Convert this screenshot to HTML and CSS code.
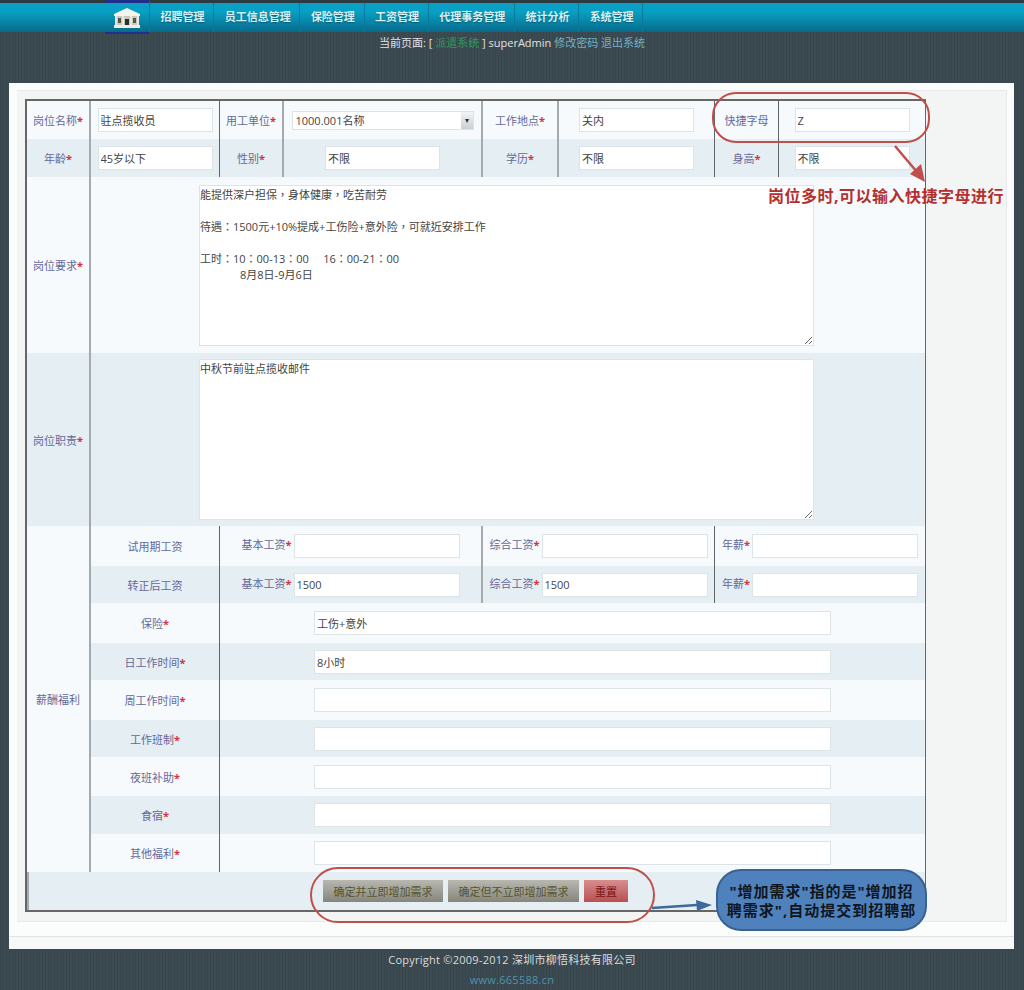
FILE: index.html
```html
<!DOCTYPE html>
<html lang="en">
<head>
  <meta charset="UTF-8">
  <meta name="viewport" content="width=device-width, initial-scale=1.0">
  <title>增加需求</title>
  <link rel="stylesheet" href="styles.css">
</head>
<body>
  <!-- Top navigation -->
  <div class="nav">
    <a class="nav-home">
      <svg width="28" height="20" viewBox="0 0 28 20">
        <path d="M14 0 L27 6 L27 8 L1 8 L1 6 Z" fill="#f4f4ee"/>
        <rect x="2" y="8" width="24" height="9" fill="#c9c9bc"/>
        <rect x="1" y="17" width="26" height="3" fill="#eeeee6"/>
        <rect x="5" y="10" width="3" height="5" fill="#55554e"/>
        <rect x="12" y="11" width="4" height="6" fill="#2e2e2a"/>
        <rect x="20" y="10" width="3" height="5" fill="#55554e"/>
        <path d="M3 8 V17 M10 8 V17 M18 8 V17 M25 8 V17" stroke="#f4f4ee" stroke-width="1.5"/>
      </svg>
    </a>
    <a class="nav-item">招聘管理</a>
    <a class="nav-item">员工信息管理</a>
    <a class="nav-item">保险管理</a>
    <a class="nav-item">工资管理</a>
    <a class="nav-item">代理事务管理</a>
    <a class="nav-item">统计分析</a>
    <a class="nav-item">系统管理</a>
  </div>

  <div class="subline">当前页面: [ <span class="green">派遣系统</span> ] superAdmin <a class="link">修改密码</a> <a class="link">退出系统</a></div>

  <div class="panel">
    <div class="inner">
      <table class="form">
        <colgroup>
          <col class="c1"><col class="c2"><col class="c3"><col class="c4">
          <col class="c5"><col class="c6"><col class="c7"><col class="c8">
        </colgroup>
        <tr class="light h38">
          <th>岗位名称<b>*</b></th>
          <td class="gl"><input class="inp" value="驻点揽收员"></td>
          <th class="dl">用工单位<b>*</b></th>
          <td class="gl">
            <div class="select"><span class="select-text">1000.001名称</span><span class="select-btn">▾</span></div>
          </td>
          <th class="gl">工作地点<b>*</b></th>
          <td class="gl"><input class="inp" value="关内"></td>
          <th class="dl">快捷字母</th>
          <td class="dl"><input class="inp" value="Z"></td>
        </tr>
        <tr class="dark h38">
          <th>年龄<b>*</b></th>
          <td class="gl"><input class="inp" value="45岁以下"></td>
          <th class="dl">性别<b>*</b></th>
          <td class="gl"><input class="inp" value="不限"></td>
          <th class="gl">学历<b>*</b></th>
          <td class="gl"><input class="inp" value="不限"></td>
          <th class="dl">身高<b>*</b></th>
          <td class="dl"><input class="inp" value="不限"></td>
        </tr>
        <tr class="light h176">
          <th>岗位要求<b>*</b></th>
          <td class="gl area-cell" colspan="7"><textarea class="area">能提供深户担保，身体健康，吃苦耐劳

待遇：1500元+10%提成+工伤险+意外险，可就近安排工作

工时：10：00-13：00     16：00-21：00
              8月8日-9月6日</textarea></td>
        </tr>
        <tr class="dark h173">
          <th>岗位职责<b>*</b></th>
          <td class="gl area-cell" colspan="7"><textarea class="area">中秋节前驻点揽收邮件</textarea></td>
        </tr>
        <tr class="light h40">
          <th class="pay" rowspan="9">薪酬福利</th>
          <th class="gl">试用期工资</th>
          <td class="dl" colspan="2"><span class="lbl">基本工资<b>*</b></span><input class="inp wide"></td>
          <td class="gl" colspan="2"><span class="lbl">综合工资<b>*</b></span><input class="inp wide"></td>
          <td class="dl" colspan="2"><span class="lbl">年薪<b>*</b></span><input class="inp wide"></td>
        </tr>
        <tr class="dark h37">
          <th class="gl">转正后工资</th>
          <td class="dl" colspan="2"><span class="lbl">基本工资<b>*</b></span><input class="inp wide" value="1500"></td>
          <td class="gl" colspan="2"><span class="lbl">综合工资<b>*</b></span><input class="inp wide" value="1500"></td>
          <td class="dl" colspan="2"><span class="lbl">年薪<b>*</b></span><input class="inp wide"></td>
        </tr>
        <tr class="light h40">
          <th class="gl">保险<b>*</b></th>
          <td class="dl" colspan="6"><input class="inp long" value="工伤+意外"></td>
        </tr>
        <tr class="dark h37">
          <th class="gl">日工作时间<b>*</b></th>
          <td class="dl" colspan="6"><input class="inp long" value="8小时"></td>
        </tr>
        <tr class="light h40">
          <th class="gl">周工作时间<b>*</b></th>
          <td class="dl" colspan="6"><input class="inp long"></td>
        </tr>
        <tr class="dark h37">
          <th class="gl">工作班制<b>*</b></th>
          <td class="dl" colspan="6"><input class="inp long"></td>
        </tr>
        <tr class="light h39">
          <th class="gl">夜班补助<b>*</b></th>
          <td class="dl" colspan="6"><input class="inp long"></td>
        </tr>
        <tr class="dark h38">
          <th class="gl">食宿<b>*</b></th>
          <td class="dl" colspan="6"><input class="inp long"></td>
        </tr>
        <tr class="light h38">
          <th class="gl">其他福利<b>*</b></th>
          <td class="dl" colspan="6"><input class="inp long"></td>
        </tr>
        <tr class="dark h38">
          <td class="actions" colspan="8">
            <div class="btn-row">
              <button class="btn">确定并立即增加需求</button>
              <button class="btn">确定但不立即增加需求</button>
              <button class="btn btn-red">重置</button>
            </div>
          </td>
        </tr>
      </table>
    </div>
  </div>

  <div class="footer">
    <div class="copy">Copyright ©2009-2012 深圳市柳悟科技有限公司</div>
    <div class="site">www.665588.cn</div>
  </div>

  <!-- Annotations drawn over the screenshot -->
  <svg class="marks" width="1024" height="990" viewBox="0 0 1024 990">
    <rect x="713" y="93" width="216" height="49" rx="23" fill="none" stroke="#bf4f4b" stroke-width="2"/>
    <path d="M895 146 L917 172" stroke="#bf4f4b" stroke-width="2.5" fill="none"/>
    <path d="M925 182 L910 174 L921 164 Z" fill="#bf4f4b"/>
    <rect x="311" y="868" width="343" height="54" rx="27" fill="none" stroke="#bf4f4b" stroke-width="2"/>
    <path d="M652 908 L697 905" stroke="#3d6a9c" stroke-width="2.5" fill="none"/>
    <path d="M712 905 L696 900 L697 911 Z" fill="#3d6a9c"/>
  </svg>
  <div class="note-red">岗位多时,可以输入快捷字母进行</div>
  <div class="note-blue">"增加需求"指的是"增加招<br>聘需求",自动提交到招聘部</div>
</body>
</html>
```

FILE: styles.css
```css
/* Page */
body {
  position: relative;
  margin: 0;
  height: 990px;
  overflow: hidden;
  font-family: "Open Sans", "Noto Sans CJK SC", sans-serif;
  font-size: 11px;
  color: #444;
  background-color: #3c4a52;
  background-image: repeating-linear-gradient(90deg, rgba(0, 0, 0, 0.07) 0 1px, transparent 1px 3px);
}

/* Top navigation */
.nav {
  display: flex;
  height: 29px;
  padding-left: 105px;
  border-top: 3px solid #2c3a42;
  background: linear-gradient(#0b9fc6, #07a0c4 30%, #086a8a);
}

.nav-home {
  display: flex;
  align-items: center;
  justify-content: center;
  width: 44px;
  margin-top: -3px;
  margin-bottom: -2px;
  border-top: 3px solid #1f2f8c;
  border-bottom: 2px solid #1f2f8c;
  border-right: 1px solid #0a7a9a;
}

.nav-item {
  padding: 0 8.7px 0 10.5px;
  line-height: 28px;
  font-weight: bold;
  color: #d9eff3;
  border-right: 1px solid #0a7a9a;
  text-shadow: 0 1px 1px rgba(0, 0, 0, 0.3);
}

.subline {
  height: 51px;
  padding-top: 3px;
  box-sizing: border-box;
  line-height: 15px;
  text-align: center;
  color: #e2e2e2;
}

.green {
  color: #2f9a5c;
}

.link {
  color: #73b0c6;
}

/* Content panel */
.panel {
  height: 866px;
  margin: 0 10px 0 9px;
  padding: 7px 7px 0 8px;
  box-sizing: border-box;
  background: linear-gradient(#fbfcfc 0 853px, #e2e4e4 853px 854px, #f7f8f8 854px);
}

.inner {
  height: 832px;
  padding: 8px 0 0 8px;
  box-sizing: border-box;
  background-color: #f3f4f4;
  border: 1px solid #e8eaea;
  border-width: 1px 1px 1px 0;
}

/* Form table */
.form {
  table-layout: fixed;
  width: 901px;
  border-collapse: separate;
  border-spacing: 0;
  border: 2px solid #666;
  border-width: 2px 1px 2px 2px;
}

.c1 { width: 62px; }
.c2 { width: 130px; }
.c3 { width: 63px; }
.c4 { width: 199px; }
.c5 { width: 76px; }
.c6 { width: 157px; }
.c7 { width: 64px; }
.c8 { width: 147px; }

.h37 { height: 37px; }
.h38 { height: 38px; }
.h39 { height: 39px; }
.h40 { height: 40px; }
.h173 { height: 173px; }
.h176 { height: 176px; }

.light {
  background-color: #f6fafc;
}

.dark {
  background-color: #e4eef3;
}

th, td {
  padding: 0;
  text-align: center;
  vertical-align: middle;
}

th, .lbl {
  font-weight: normal;
  color: #66699a;
}

th b, .lbl b {
  font-weight: bold;
  color: #d4343c;
}

.pay {
  background-color: #f6fafc;
}

/* Column lines */
.gl {
  border-left: 2px solid #a4aaad;
}

.dl {
  border-left: 1px solid #5f666a;
}

/* Inputs */
.inp {
  width: 115px;
  height: 24px;
  padding: 0 2px;
  box-sizing: border-box;
  font: inherit;
  color: #444;
  background-color: #fff;
  border: 1px solid #dde4e8;
  outline: none;
  vertical-align: middle;
}

.wide {
  width: 166px;
  margin-left: 2px;
}

.long {
  width: 517px;
}

.select {
  display: inline-flex;
  align-items: center;
  width: 182px;
  height: 19px;
  background-color: #fff;
  border: 1px solid #dde4e8;
  box-sizing: border-box;
  vertical-align: middle;
}

.select-text {
  flex: 1;
  padding-left: 3px;
  text-align: left;
  color: #444;
}

.select-btn {
  width: 12px;
  height: 17px;
  line-height: 16px;
  font-size: 8px;
  color: #333;
  background: linear-gradient(#f2f4f5, #c9d0d3);
}

.area-cell {
  padding-right: 3px;
}

.area {
  display: block;
  width: 615px;
  height: 161px;
  margin: 0 auto;
  padding: 1px 0;
  box-sizing: border-box;
  font-family: "Open Sans", "Noto Sans CJK TC", sans-serif;
  font-size: 11px;
  line-height: 16px;
  color: #444;
  background-color: #fff;
  border: 1px solid #dde4e8;
  outline: none;
}

/* Buttons */
.actions {
  border-left: 2px solid #a4aaad;
}

.btn-row {
  display: flex;
  justify-content: center;
  gap: 5px;
  padding-right: 3px;
}

.btn {
  height: 22px;
  padding: 0 10.5px;
  font: inherit;
  color: #55552c;
  background: linear-gradient(#b8b8b0, #85857e);
  border: none;
}

.btn-red {
  min-width: 44px;
  color: #7a1414;
  background: linear-gradient(#d88e8e, #b84f52);
}

/* Footer */
.footer {
  text-align: center;
}

.copy {
  padding-top: 3px;
  line-height: 16px;
  letter-spacing: 0.25px;
  color: #dcdcdc;
}

.site {
  padding-top: 4px;
  line-height: 16px;
  letter-spacing: 0.25px;
  color: #4f93ad;
}

/* Annotations */
.marks {
  position: absolute;
  left: 0;
  top: 0;
  pointer-events: none;
}

.note-red {
  position: absolute;
  left: 768px;
  top: 185px;
  font-size: 16px;
  font-weight: bold;
  letter-spacing: 0.5px;
  line-height: 22px;
  white-space: nowrap;
  color: #b2302f;
}

.note-blue {
  position: absolute;
  left: 716px;
  top: 869px;
  width: 211px;
  height: 62px;
  padding-top: 11px;
  box-sizing: border-box;
  font-size: 15px;
  font-weight: bold;
  line-height: 19px;
  letter-spacing: 1px;
  text-align: center;
  white-space: nowrap;
  color: #10161e;
  background-color: #4f81bd;
  border: 2px solid #3a628f;
  border-radius: 25px;
}
```
